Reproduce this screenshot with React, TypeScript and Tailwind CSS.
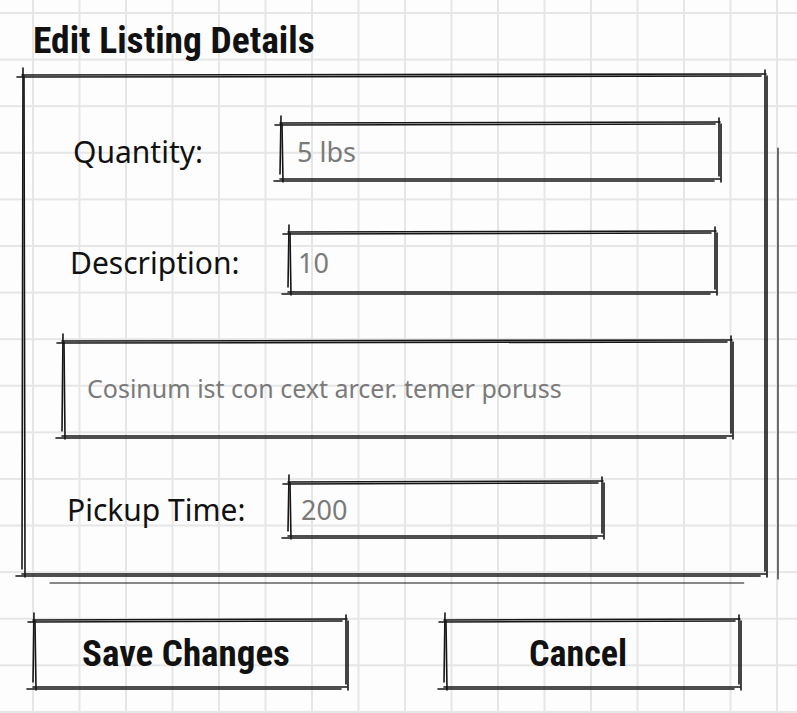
import React from 'react';

const sans = "font-['Noto_Sans','Liberation_Sans',sans-serif]";
const narrow = "font-['Roboto','Liberation_Sans',sans-serif] font-bold font-stretch-condensed";

function Sketch({ className = '', frame = false, children }: { className?: string; frame?: boolean; children?: React.ReactNode }) {
  return (
    <div className={`relative ${className}`}>
      <svg
        className="pointer-events-none absolute inset-0 h-full w-full overflow-visible"
        fill="none"
        stroke="#151515"
        strokeLinecap="round"
      >
        <g strokeWidth="1.6">
          {/* top */}
          <line x1="0" y1="1" x2="100%" y2="0" />
          <g transform="translate(-5 3)">
            <line x1="0" y1="0" x2="100%" y2="-1" />
          </g>
          {/* bottom */}
          <g transform="translate(0 -1)">
            <line x1="0" y1="100%" x2="100%" y2="100%" />
          </g>
          <g transform="translate(-6 1)">
            <line x1="0" y1="100%" x2="100%" y2="100%" />
          </g>
          {/* left */}
          <g transform="translate(0 -6)">
            <line x1="1" y1="0" x2="0" y2="100%" />
          </g>
          <g transform="translate(2 2)">
            <line x1="0" y1="0" x2="1" y2="100%" />
          </g>
          {/* right */}
          <g transform="translate(-1 -4)">
            <line x1="100%" y1="0" x2="100%" y2="100%" />
          </g>
          <g transform="translate(1 2)">
            <line x1="100%" y1="0" x2="100%" y2="100%" />
          </g>
          {frame && (
            <>
              <g transform="translate(12 4)">
                <line x1="100%" y1="70" x2="100%" y2="100%" strokeWidth="1.2" />
              </g>
              <g transform="translate(0 8)">
                <line x1="28" y1="100%" x2="97%" y2="100%" strokeWidth="1.2" />
              </g>
            </>
          )}
        </g>
      </svg>
      {children}
    </div>
  );
}

function Field({ value, className }: { value: string; className: string }) {
  return (
    <Sketch className={`flex items-center ${className}`}>
      <span className={`${sans} text-[27px] leading-none text-[#7a7a7a]`}>{value}</span>
    </Sketch>
  );
}

export default function App() {
  return (
    <div
      className={`min-h-[713px] w-full bg-[#fdfdfd] bg-[linear-gradient(to_right,#e6e6e6_1.5px,transparent_1.5px),linear-gradient(to_bottom,#e6e6e6_1.5px,transparent_1.5px)] bg-[size:46.5px_46.6px] bg-[position:32px_12px] pl-[22px] pt-[16px] text-[#111]`}
    >
      <h1 className={`${narrow} ml-[11px] text-[37.5px] leading-[48px]`}>Edit Listing Details</h1>

      <Sketch frame className="mt-[10px] flex h-[501px] w-[744px] flex-col">
        <div className="mt-[48px] flex items-center pl-[51px]">
          <span className={`${sans} w-[207px] text-[30px]`}>Quantity:</span>
          <Field value="5 lbs" className="h-[58px] w-[440px] pl-[17px]" />
        </div>

        <div className="mt-[51px] flex items-center pl-[48px]">
          <span className={`${sans} w-[218px] text-[30px]`}>Description:</span>
          <Field value="10" className="h-[62px] w-[428px] pl-[10px]" />
        </div>

        <Sketch className="ml-[40px] mt-[47px] flex h-[97px] w-[670px] items-center pl-[25px]">
          <span className={`${sans} text-[25px] text-[#7a7a7a]`}>Cosinum ist con cext arcer. temer poruss</span>
        </Sketch>

        <div className="mt-[44px] flex items-center pl-[45px]">
          <span className={`${sans} w-[221px] text-[30px]`}>Pickup Time:</span>
          <Field value="200" className="h-[56px] w-[315px] pl-[13px]" />
        </div>
      </Sketch>

      <div className="ml-[11px] mt-[44px] flex">
        <Sketch className="flex h-[69px] w-[314px] items-center justify-center pr-[8px]">
          <span className={`${narrow} text-[37px]`}>Save Changes</span>
        </Sketch>
        <Sketch className="ml-[97px] flex h-[69px] w-[296px] items-center justify-center pr-[28px]">
          <span className={`${narrow} text-[36px]`}>Cancel</span>
        </Sketch>
      </div>
    </div>
  );
}
